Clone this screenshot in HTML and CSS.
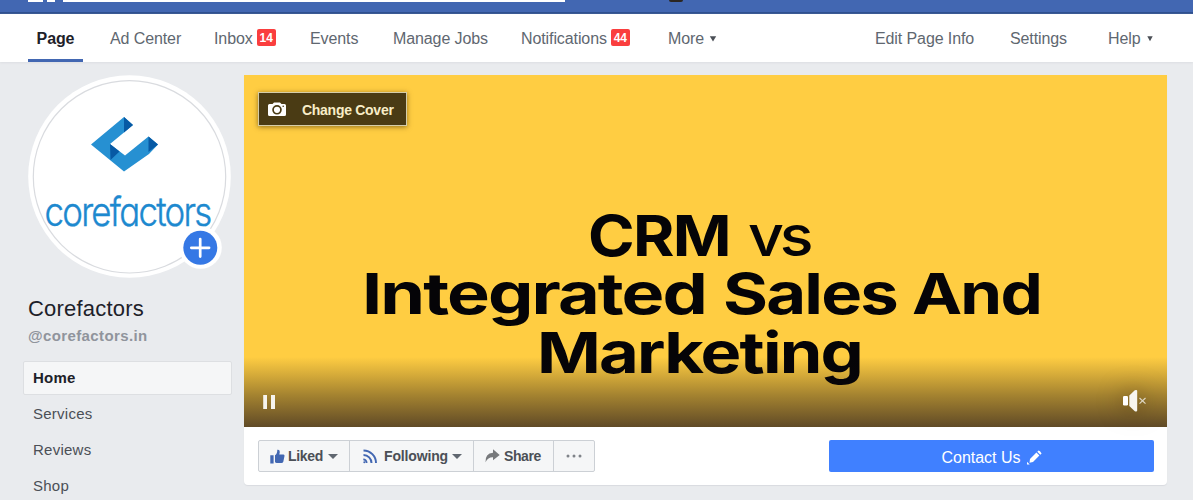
FILE: index.html
```
<!DOCTYPE html>
<html lang="en">
<head>
<meta charset="utf-8">
<title>Corefactors</title>
<link rel="stylesheet" href="styles.css">
</head>
<body>
<header class="topbar">
  <span class="logo"></span><span class="logo logo-end"></span><span class="search"></span><span class="user"></span>
</header>
<nav class="nav">
  <a class="item active"><span>Page</span></a>
  <a class="item adcenter">Ad Center</a>
  <a class="item">Inbox<b class="count">14</b></a>
  <a class="item">Events</a>
  <a class="item">Manage Jobs</a>
  <a class="item">Notifications<b class="count">44</b></a>
  <a class="item">More<svg class="caret" width="8" height="6" viewBox="0 0 8 6"><path d="M.8 .3h6.4L4 5.6z" fill="#4b4f56"/></svg></a>
  <a class="item">Edit Page Info</a>
  <a class="item">Settings</a>
  <a class="item">Help<svg class="caret" width="8" height="6" viewBox="0 0 8 6"><path d="M1.3 .3h5.4L4 5.2z" fill="#4b4f56"/></svg></a>
</nav>
<main class="page">
  <aside class="side">
    <svg class="avatar" width="203" height="203" viewBox="28 75 203 203">
      <circle cx="129.5" cy="176.5" r="101.3" fill="#fff"/>
      <circle cx="129.5" cy="176.8" r="96.2" fill="#fff" stroke="#d9dbdf" stroke-width="1.2"/>
      <path d="M124 117L91 144.5L124 171.5L149 154L158 144.5L148.500 136.500L125 155.500L110 144L133 125z" fill="#2690d2"/>
      <path d="M124 117L133 125L124 132.500zM148.500 136.500L158 144.500L148.500 152zM110 144L119.500 151.500L110.500 160z" fill="#0759a4"/>
      <text class="wordmark" x="44.500" y="226" textLength="166" lengthAdjust="spacingAndGlyphs">corefactors</text>
      <circle cx="200.500" cy="247.500" r="21.300" fill="#fff"/>
      <circle cx="200.300" cy="247.800" r="17" fill="#3578e5"/>
      <path d="M191.300 247.800h17.800M200.200 239v17.600" stroke="#fff" stroke-width="2.700" stroke-linecap="round"/>
    </svg>
    <h1 class="name">Corefactors</h1>
    <p class="handle">@corefactors.in</p>
    <ul class="menu">
      <li class="current">Home</li>
      <li>Services</li>
      <li>Reviews</li>
      <li>Shop</li>
    </ul>
  </aside>
  <section class="card">
    <div class="cover">
      <svg class="headline" width="923" height="352" viewBox="244 75 923 352">
        <text x="588" y="255.500" textLength="142" lengthAdjust="spacingAndGlyphs">CRM</text>
        <text class="light" x="748" y="255.500" textLength="61" lengthAdjust="spacingAndGlyphs">vs</text>
        <text x="362" y="313.500" textLength="344" lengthAdjust="spacingAndGlyphs">Integrated</text>
        <text x="723" y="313.500" textLength="174" lengthAdjust="spacingAndGlyphs">Sales</text>
        <text x="912" y="313.500" textLength="129" lengthAdjust="spacingAndGlyphs">And</text>
        <text x="537" y="372.500" textLength="325" lengthAdjust="spacingAndGlyphs">Marketing</text>
      </svg>
      <div class="shade"></div>
      <div class="change">
        <svg width="18" height="15" viewBox="0 0 18 15"><path fill="#fff" fill-rule="evenodd" d="M1.500 2H4.500L6 .5h6L13.500 2h3q1.500 0 1.500 1.500v9q0 1.500-1.500 1.500h-15Q0 14 0 12.500v-9Q0 2 1.500 2zM9 3a4.800 4.800 0 1 0 0 9.600A4.800 4.800 0 0 0 9 3zM9 4.700a3.100 3.100 0 1 1 0 6.200A3.100 3.100 0 0 1 9 4.700z"/><circle cx="15.200" cy="4.200" r=".8" fill="#4a3b14"/></svg>
        <span>Change Cover</span>
      </div>
      <svg class="pause" width="13" height="14" viewBox="0 0 13 14"><path d="M.2 0h3.800v14H.2zM8 0h4v14H8z" fill="#f6f4ee"/></svg>
      <svg class="mute" width="24" height="22" viewBox="0 0 24 22"><rect y="6" width="5" height="9.500" rx="1.300" fill="#fff"/><path d="M6.300 5.500L11.800.3Q14.200-.4 14.200 1v19.400q0 1.500-2.400.8L6.300 16z" fill="#f7f5ef"/><path d="M16.500 8l6 5.600M22.500 8l-6 5.600" stroke="#ddd6c2" stroke-width="1.200"/></svg>
    </div>
    <div class="actions">
      <div class="group">
        <span class="btn liked"><svg width="15" height="15" viewBox="0 0 15 15"><path fill="#4267b2" d="M.3 6.200h3.300v8.300H.3zM5 6.200Q7.300 5.200 7.300.8 9.700.2 9.800 3L9.300 5.500h4.200q1.300.2 1 1.500l-1.200 5.800q-.5 1.300-1.800 1.300H6.500L5 13.300z"/></svg>Liked<i class="down"></i></span>
        <span class="btn following"><svg width="14" height="15" viewBox="0 0 14 15"><g fill="none" stroke="#4267b2" stroke-width="2"><path d="M.5 1.500A12.500 12.500 0 0 1 13 14M.5 6A8 8 0 0 1 8.500 14"/></g><path d="M.3 9.500a4.300 4.300 0 0 1 4.200 4.500H2.800Q2.600 11.500.3 11.200z" fill="#4267b2"/><circle cx="1.300" cy="13.200" r="1" fill="#4267b2"/></svg>Following<i class="down"></i></span>
        <span class="btn share"><svg width="15" height="14" viewBox="0 0 15 14"><path d="M8 .3L14.700 6 8 11.300V8.200Q3 8 .5 13.300 0 4.500 8 3.800z" fill="#77797c"/></svg>Share</span>
        <span class="btn more"><svg width="16" height="4" viewBox="0 0 16 4"><g fill="#7f8389"><circle cx="2" cy="2" r="1.500"/><circle cx="8" cy="2" r="1.500"/><circle cx="14" cy="2" r="1.500"/></g></svg></span>
      </div>
      <div class="contact"><span>Contact Us</span><svg width="15" height="15" viewBox="0 0 15 15"><path d="M3 9L9.400 2.600l3 3L6 12l-3.500.8zM10.300 1.700l1.300-1.300q1.300 0 3 3l-1.300 1.300zM0 11.800l2.700 2.700H0z" fill="#fff"/></svg></div>
    </div>
  </section>
</main>
</body>
</html>
```
FILE: styles.css
```
* { box-sizing: border-box; }
body { margin: 0; height: 500px; overflow: hidden; background: #e9ebee; font-family: "Liberation Sans", Arial, sans-serif; color: #4b4f56; }
.topbar { display: flex; align-items: flex-start; height: 14px; padding-left: 28px; background: #4267b2; border-bottom: 2px solid #2f508f; }
.logo { width: 15px; height: 2px; background: #fff; }
.logo-end { width: 8px; margin-left: 4px; }
.search { width: 502px; height: 2px; margin-left: 8px; background: #fff; }
.user { width: 14px; height: 2px; margin-left: 104px; background: #2b2622; border-radius: 0 0 7px 7px; }
.nav { display: grid; grid-template-columns: 82px 104px 96px 83px 128px 147px 207px 135px 98px 60px; height: 48px; padding-left: 28px; background: #fff; font-size: 16px; letter-spacing: -.1px; box-shadow: 0 1px 2px #dcdee2; white-space: nowrap; }
.item { display: flex; align-items: center; height: 48px; padding-top: 2px; color: #606770; }
.active { width: 55px; justify-content: center; border-bottom: 3px solid #4267b2; padding-top: 5px; font-weight: bold; color: #1d2129; }
.count { width: 19px; height: 17px; margin: -3px 0 0 4px; border-radius: 2px; background: #fa3e3e; color: #fff; font-size: 12px; line-height: 18px; text-align: center; letter-spacing: 0; }
.caret { margin: -1px 0 0 5px; }
.page { display: flex; padding-top: 13px; }
.side { width: 244px; padding-left: 28px; }
.avatar { display: block; }
.wordmark { font-family: Inter, Lato, sans-serif; font-feature-settings: "cv11" 1; font-weight: 300; font-size: 40px; letter-spacing: -2px; fill: #1d89cf; stroke: #1d89cf; stroke-width: .4px; }
.name { margin: 18px 0 0; font-size: 22px; line-height: 26px; font-weight: normal; letter-spacing: .2px; color: #1d2129; }
.handle { margin: 4px 0 0; font-size: 15px; line-height: 20px; font-weight: bold; letter-spacing: .38px; color: #90949c; }
.menu { width: 210px; margin: 15px 0 0 -5px; padding: 0; list-style: none; font-size: 15px; letter-spacing: .25px; }
.menu li { height: 34px; margin-bottom: 2px; padding-left: 10px; line-height: 34px; }
.menu .current { width: 209px; padding-left: 9px; border: 1px solid #dddfe2; border-radius: 2px; background: #f5f6f7; color: #1d2129; font-weight: bold; line-height: 32px; }
.card { width: 923px; height: 410px; background: #fff; border-radius: 0 0 4px 4px; box-shadow: 0 1px 1px #d9dbdf; }
.cover { position: relative; height: 352px; background: #ffcd42; }
.headline { display: block; }
.headline text { font-family: Inter, "Open Sans", sans-serif; font-weight: 700; font-size: 57px; letter-spacing: -1.5px; fill: #050407; }
.headline .light { font-weight: 500; letter-spacing: -4px; }
.shade { position: absolute; left: 0; right: 0; bottom: 0; height: 70px; background: linear-gradient(transparent, rgba(12, 6, 14, .17) 25%, rgba(14, 8, 18, .38) 55%, rgba(18, 10, 25, .67)); }
.change { position: absolute; left: 14px; top: 17px; display: flex; align-items: center; width: 149px; height: 34px; padding: 1px 0 0 9px; border: 1px solid #d5cda9; background: #4a3b14; box-shadow: 0 1px 5px rgba(70, 50, 0, .6); color: #f8edc7; font-size: 14px; font-weight: bold; letter-spacing: -.28px; }
.change span { margin: 1px 0 0 16px; }
.pause { position: absolute; left: 19px; top: 320px; }
.mute { position: absolute; left: 879px; top: 315px; filter: drop-shadow(0 0 12px rgba(40, 20, 0, .6)); }
.actions { display: flex; justify-content: space-between; padding: 13px 13px 0 14px; }
.group { display: flex; height: 32px; border: 1px solid #ccd0d5; border-radius: 2px; background: #f5f6f7; }
.btn { display: flex; align-items: center; height: 30px; border-right: 1px solid #ccd0d5; font-size: 14px; font-weight: bold; color: #4b4f56; }
.liked { width: 91px; padding-left: 11px; gap: 3px; letter-spacing: -.3px; }
.following { width: 124px; padding-left: 13px; gap: 7px; letter-spacing: -.15px; }
.share { width: 80px; padding-left: 11px; gap: 4px; letter-spacing: -.4px; }
.more { width: 40px; padding-left: 12px; border-right: 0; }
.down { width: 0; height: 0; border: 5px solid transparent; border-top-color: #606770; border-bottom: 0; }
.liked .down { margin-left: 2px; }
.following .down { margin-left: -3px; }
.contact { display: flex; align-items: center; justify-content: center; width: 325px; height: 32px; padding-top: 2px; border-radius: 2px; background: #4080ff; color: #fff; font-size: 16px; gap: 6px; }
.contact span { padding-top: 2px; }
```
